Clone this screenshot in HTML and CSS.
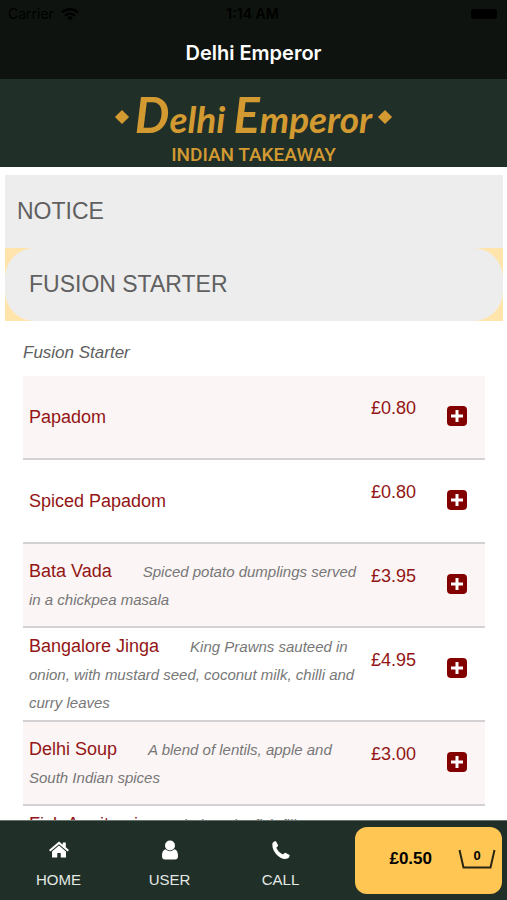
FILE: index.html
```html
<!DOCTYPE html>
<html lang="en">
<head>
  <meta charset="UTF-8" />
  <meta name="viewport" content="width=device-width, initial-scale=1.0" />
  <title>Delhi Emperor</title>
  <link rel="stylesheet" href="styles.css">
</head>
<body>
  <header class="top-bar">
    <div class="status-bar">
      <span class="carrier">Carrier
        <svg class="wifi" viewBox="0 0 18 14" aria-hidden="true">
          <path d="M1 5.5a11.5 11.5 0 0 1 16 0M4 8.6a7.2 7.2 0 0 1 10 0" fill="none" stroke="currentColor" stroke-width="2.4" />
          <path d="M6.2 10.6a4 4 0 0 1 5.6 0L9 13.4z" fill="currentColor" />
        </svg>
      </span>
      <span class="clock">1:14 AM</span>
      <span class="battery-wrap"><span class="battery"></span></span>
    </div>
    <h1>Delhi Emperor</h1>
  </header>

  <main>
    <div class="banner">
      <div class="brand">
        <span class="diamond"></span>
        <span class="brand-name"><span class="cap">D</span>elhi <span class="cap">E</span>mperor</span>
        <span class="diamond"></span>
      </div>
      <div class="tagline">INDIAN TAKEAWAY</div>
    </div>

    <div class="menu">
      <h2 class="notice">NOTICE</h2>
      <div class="category">
        <h2>FUSION STARTER</h2>
      </div>

      <section class="dishes">
        <p class="category-note">Fusion Starter</p>
        <table>
          <tbody>
            <tr>
              <td class="dish">Papadom</td>
              <td class="price">£0.80</td>
              <td class="add"><button type="button" aria-label="Add Papadom"><svg viewBox="0 0 20 20"><rect width="20" height="20" rx="4" /><path d="M10 4v12M4 10h12" /></svg></button></td>
            </tr>
            <tr>
              <td class="dish">Spiced Papadom</td>
              <td class="price">£0.80</td>
              <td class="add"><button type="button" aria-label="Add Spiced Papadom"><svg viewBox="0 0 20 20"><rect width="20" height="20" rx="4" /><path d="M10 4v12M4 10h12" /></svg></button></td>
            </tr>
            <tr>
              <td class="dish">Bata Vada <em>Spiced potato dumplings served in a chickpea masala</em></td>
              <td class="price">£3.95</td>
              <td class="add"><button type="button" aria-label="Add Bata Vada"><svg viewBox="0 0 20 20"><rect width="20" height="20" rx="4" /><path d="M10 4v12M4 10h12" /></svg></button></td>
            </tr>
            <tr>
              <td class="dish">Bangalore Jinga <em>King Prawns sauteed in onion, with mustard seed, coconut milk, chilli and curry leaves</em></td>
              <td class="price">£4.95</td>
              <td class="add"><button type="button" aria-label="Add Bangalore Jinga"><svg viewBox="0 0 20 20"><rect width="20" height="20" rx="4" /><path d="M10 4v12M4 10h12" /></svg></button></td>
            </tr>
            <tr>
              <td class="dish">Delhi Soup <em>A blend of lentils, apple and South Indian spices</em></td>
              <td class="price">£3.00</td>
              <td class="add"><button type="button" aria-label="Add Delhi Soup"><svg viewBox="0 0 20 20"><rect width="20" height="20" rx="4" /><path d="M10 4v12M4 10h12" /></svg></button></td>
            </tr>
            <tr>
              <td class="dish last" colspan="3">Fish Amritsari <em>Fried tender fish fillet</em></td>
            </tr>
          </tbody>
        </table>
      </section>
    </div>
  </main>

  <footer class="bottom-bar">
    <nav>
      <a href="#home">
        <svg viewBox="0 0 20 20" aria-hidden="true"><path d="M10 5.500 17 11.500V17.500h-5.300v-4.500H8.300v4.500H3v-6z" /><path d="M10 1.500 13.800 4.700V2.500h3v4.700L20 10 18.600 11.500 10 4.300 1.400 11.500 0 10z" /></svg>
        HOME
      </a>
      <a href="#user">
        <svg viewBox="0 0 20 20" aria-hidden="true"><circle cx="10" cy="5.500" r="5" /><path d="M5.600 9.300Q10 13 14.400 9.300C17 10 18 12.500 18 16q0 3.500-3 3.500H5q-3 0-3-3.500c0-3.500 1-6 3.600-6.700z" /></svg>
        USER
      </a>
      <a href="#call">
        <svg viewBox="0 0 20 20" aria-hidden="true"><path d="M1.500 3.200C2.500 1.300 4 1 5 1.200L7.200 5.600Q7 6.600 5.300 7.700C6.500 10.500 9 13 12 14.600q1.300-1.900 2.300-1.900L18.600 15q.2 2.600-2.200 3.500C9.500 21 0 11 1.500 3.200z" /></svg>
        CALL
      </a>
    </nav>
    <button type="button" class="cart">
      <span class="total">£0.50</span>
      <span class="basket">
        <svg viewBox="0 0 38 22" aria-hidden="true"><path d="M1.500 2 5.500 19.500H32.500L36.500 2" /></svg>
        <span class="count">0</span>
      </span>
    </button>
  </footer>
</body>
</html>
```
FILE: styles.css
```css
* {
  box-sizing: border-box;
}
body {
  font-family: "Liberation Sans", Arial, sans-serif;
  margin: 0;
  height: 100vh;
  display: flex;
  flex-direction: column;
  background: #fff;
  color: #606060;
}
h1, h2, p {
  margin: 0;
  font-weight: normal;
}
.top-bar {
  background: #0e130f;
  color: #fff;
  text-align: center;
  flex: none;
}
.status-bar {
  display: grid;
  grid-template-columns: 1fr auto 1fr;
  align-items: center;
  height: 27px;
  padding: 0 10px 0 8px;
  color: #000;
  font-family: Inter, sans-serif;
  font-size: 14px;
}
.carrier {
  display: flex;
  align-items: center;
  gap: 7px;
}
.wifi {
  width: 18px;
  height: 14px;
}
.clock {
  font-weight: 600;
}
.battery-wrap {
  display: flex;
  justify-content: flex-end;
}
.battery {
  width: 26px;
  height: 10px;
  border-radius: 3px;
  background: #000;
}
h1 {
  font-family: Inter, sans-serif;
  font-size: 20px;
  font-weight: 600;
  line-height: 52px;
}
main {
  flex: 1;
  min-height: 0;
  overflow-y: auto;
  scrollbar-width: none;
}
.banner {
  height: 88px;
  padding-top: 11px;
  background: #203028;
  color: #d49a32;
  text-align: center;
}
.brand {
  display: flex;
  justify-content: center;
  align-items: center;
  gap: 8px;
  height: 53px;
}
.brand-name {
  font-family: Lato, sans-serif;
  font-size: 37px;
  font-style: italic;
  font-weight: bold;
  line-height: 48px;
}
.cap {
  font-size: 49px;
}
.diamond {
  width: 10px;
  height: 10px;
  background: #d49a32;
  transform: rotate(45deg);
}
.tagline {
  font-family: Roboto, sans-serif;
  font-size: 19px;
  font-weight: 500;
  line-height: 24px;
}
.menu {
  padding: 8px 4px 0 5px;
}
h2 {
  font-size: 23px;
  line-height: 73px;
  background: #ededed;
}
.notice {
  padding-left: 12px;
}
.category {
  background: #ffe5ac;
}
.category h2 {
  padding-left: 24px;
  border-radius: 30px;
}
.dishes {
  padding: 0 18px;
}
.category-note {
  padding-top: 8px;
  font-size: 17px;
  font-style: italic;
  line-height: 47px;
}
table {
  width: 100%;
  border-spacing: 0;
}
tr:nth-child(odd) {
  background: #fbf5f5;
}
td {
  height: 84px;
  padding: 0;
  border-bottom: 2px solid #d3d1d4;
  font-size: 18px;
  line-height: 28px;
  color: #931515;
}
.dish {
  padding: 4px 6px;
}
.dish em {
  margin-left: 26px;
  font-size: 15px;
  line-height: 20px;
  color: #777;
}
.last {
  vertical-align: top;
}
.price {
  width: 76px;
  padding-top: 18px;
  vertical-align: top;
}
.add {
  width: 38px;
  padding-top: 30px;
  vertical-align: top;
}
.add button {
  display: block;
  padding: 0;
  border: 0;
  background: none;
  cursor: pointer;
}
.add svg {
  display: block;
  width: 20px;
  height: 20px;
  fill: #830000;
  stroke: #fff;
  stroke-width: 3;
}
.add rect {
  stroke: none;
}
.bottom-bar {
  flex: none;
  display: flex;
  height: 80px;
  padding: 6px 5px 6px 3px;
  border-top: 1px solid #66736c;
  background: #203028;
}
nav {
  flex: 1;
  display: flex;
  margin-right: 19px;
}
nav a {
  flex: 1;
  display: flex;
  flex-direction: column;
  align-items: center;
  gap: 8px;
  padding-top: 13px;
  color: #e4e9e6;
  font-size: 15px;
  line-height: 24px;
  text-decoration: none;
}
nav svg {
  width: 20px;
  height: 20px;
  fill: #fff;
}
.cart {
  display: flex;
  align-items: center;
  justify-content: flex-end;
  gap: 26px;
  width: 147px;
  padding: 0 6px 3px 0;
  border: 0;
  border-radius: 12px;
  background: #ffc653;
  color: #000;
  font-family: inherit;
  font-size: 17px;
  font-weight: bold;
  cursor: pointer;
}
.basket {
  display: grid;
  place-items: center;
  width: 38px;
}
.basket svg {
  grid-area: 1 / 1;
  width: 38px;
  height: 22px;
  fill: none;
  stroke: #2a2414;
  stroke-width: 2;
}
.count {
  grid-area: 1 / 1;
  padding-bottom: 8px;
  font-size: 13px;
}
```
